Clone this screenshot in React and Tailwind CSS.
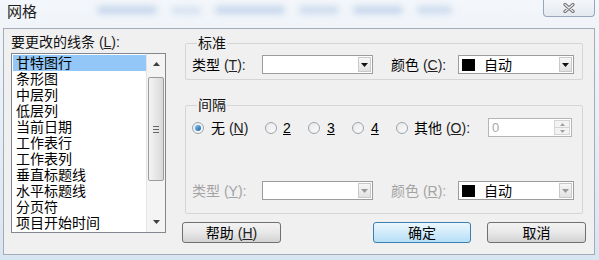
import React from 'react';

const items = ['甘特图行', '条形图', '中层列', '低层列', '当前日期', '工作表行', '工作表列', '垂直标题线', '水平标题线', '分页符', '项目开始时间'];

function Key({ k, disabled, colon = true }) {
  return (
    <span className={disabled ? 'text-[#a3a3a3]' : 'text-[#222]'}>
      {' '}(<span className="underline">{k}</span>){colon ? ':' : ''}
    </span>
  );
}

function Combo({ width, color, disabled }) {
  return (
    <div className={`flex items-center h-[19px] border border-[#9c9c9c] bg-white ${width}`}>
      {color && (
        <div className="flex items-center flex-1 pl-[3px] gap-[9px]">
          <span className="w-[13px] h-[12px] bg-black" />
          <span className="text-[14px] leading-[16px] text-black">自动</span>
        </div>
      )}
      <div className="ml-auto mr-[1px] w-[13px] h-[15px] flex items-center justify-center border border-[#c9c9c9] bg-gradient-to-b from-[#f7f7f7] to-[#e2e2e2]">
        <svg width="7" height="4" viewBox="0 0 7 4">
          <path d="M0 0 H7 L3.5 4 Z" fill={disabled ? '#9a9a9a' : '#111'} />
        </svg>
      </div>
    </div>
  );
}

function Radio({ checked }) {
  return (
    <span className="w-[12px] h-[12px] rounded-full border border-[#9aa3ad] bg-gradient-to-br from-[#e9e9e9] to-[#fbfbfb] flex items-center justify-center shrink-0">
      {checked && <span className="w-[6px] h-[6px] rounded-full bg-gradient-to-br from-[#7fc4f2] to-[#1c5fa8]" />}
    </span>
  );
}

function Button({ children, primary, width }) {
  return (
    <div className={`h-[21px] ${width} rounded-[3px] border flex items-center justify-center text-[14px] leading-[16px] text-black ${primary ? 'border-[#3c7fb1] bg-gradient-to-b from-[#ecf7fd] to-[#b6dff7]' : 'border-[#707070] bg-gradient-to-b from-[#f3f3f3] via-[#e8e8e8] to-[#d3d3d3]'}`}>
      <span>{children}</span>
    </div>
  );
}

export default function App() {
  return (
    <div
      className="w-[599px] h-[260px] overflow-hidden bg-gradient-to-b from-[#f3f6fa] via-[#e5eef7] to-[#d8e5f2] text-black"
      style={{ fontFamily: '"Liberation Sans", "Noto Sans CJK SC", sans-serif' }}
    >
      <div className="h-[28px] flex items-start">
        <div className="ml-[7px] mt-[3px] text-[15px] leading-[17px] text-[#1e1e1e]">网格</div>
        <div className="flex items-center gap-[14px] ml-[60px] mt-[6px] blur-[3px] opacity-60">
          <span className="w-[60px] h-[8px] bg-[#a9c3e3] rounded" />
          <span className="w-[30px] h-[7px] bg-[#c1d4ea] rounded" />
          <span className="w-[70px] h-[8px] bg-[#a9c3e3] rounded" />
          <span className="w-[40px] h-[8px] bg-[#b4cbe6] rounded" />
          <span className="w-[50px] h-[8px] bg-[#a9c3e3] rounded" />
          <span className="w-[35px] h-[8px] bg-[#b4cbe6] rounded" />
        </div>
        <div className="ml-auto mr-[4px] w-[52px] h-[17px] rounded-b-[4px] border border-t-0 border-[#97a7ba] bg-gradient-to-b from-[#f4f6f9] to-[#e4e9ef] flex items-center justify-center">
          <svg width="12" height="10" viewBox="0 0 12 10">
            <path d="M2 1.5 L10 8.5 M10 1.5 L2 8.5" stroke="#6d6d6d" strokeWidth="3.2" strokeLinecap="round" />
            <path d="M2 1.5 L10 8.5 M10 1.5 L2 8.5" stroke="#eeeeee" strokeWidth="1.3" strokeLinecap="round" />
          </svg>
        </div>
      </div>

      <div className="ml-[3px] w-[592px] h-[227px] border border-[#a4acb6] bg-[#f0f0f0] flex">
        {/* left: list */}
        <div className="ml-[7px] pt-[5px] w-[155px]">
          <div className="text-[14px] leading-[16px] text-[#111]">
            要更改的线条<Key k="L" />
          </div>
          <div className="mt-[3px] h-[180px] border border-[#828790] bg-white flex">
            <div className="flex-1 pt-[1px] pl-[1px]">
              {items.map((t, i) => (
                <div
                  key={t}
                  className={`h-[16px] pl-[3px] text-[14px] leading-[16px] text-black ${i === 0 ? 'bg-[#92c7f7]' : ''}`}
                >
                  {t}
                </div>
              ))}
            </div>
            <div className="w-[19px] border-l border-[#e4e4e4] bg-[#f4f4f4] flex flex-col items-center">
              <div className="h-[20px] flex items-center justify-center">
                <svg width="7" height="4" viewBox="0 0 7 4">
                  <path d="M0 4 H7 L3.5 0 Z" fill="#404040" />
                </svg>
              </div>
              <div className="mt-[3px] w-[16px] h-[104px] rounded-[2px] border border-[#9b9b9b] bg-gradient-to-r from-[#f3f3f3] via-[#e7e7e7] to-[#d9d9d9] flex flex-col items-center justify-center gap-[2px]">
                <span className="w-[6px] h-[1px] bg-[#666]" />
                <span className="w-[6px] h-[1px] bg-[#666]" />
                <span className="w-[6px] h-[1px] bg-[#666]" />
              </div>
              <div className="mt-auto h-[20px] flex items-center justify-center">
                <svg width="7" height="4" viewBox="0 0 7 4">
                  <path d="M0 0 H7 L3.5 4 Z" fill="#404040" />
                </svg>
              </div>
            </div>
          </div>
        </div>

        {/* right */}
        <div className="ml-[16px] w-[404px] pt-[6px] flex flex-col">
          <fieldset className="mx-[3px] border border-[#d5d5d5] rounded-[2px] px-[6px] pb-[5px]">
            <legend className="ml-[5px] px-[1px] text-[14px] leading-[16px] text-[#111]">标准</legend>
            <div className="mt-[4px] flex items-center text-[14px] leading-[16px]">
              <div className="w-[70px]">类型<Key k="T" /></div>
              <Combo width="w-[111px]" />
              <div className="ml-[18px] w-[67px]">颜色<Key k="C" /></div>
              <Combo width="w-[116px]" color />
            </div>
          </fieldset>

          <fieldset className="mt-[17px] mx-[3px] border border-[#d5d5d5] rounded-[2px] px-[6px] pb-[13px]">
            <legend className="ml-[5px] px-[1px] text-[14px] leading-[16px] text-[#111]">间隔</legend>
            <div className="mt-[5px] h-[19px] flex items-center text-[14px] leading-[16px]">
              <div className="w-[73px] flex items-center gap-[7px]"><Radio checked /><span>无<Key k="N" colon={false} /></span></div>
              <div className="w-[43px] flex items-center gap-[6px]"><Radio /><span className="underline">2</span></div>
              <div className="w-[44px] flex items-center gap-[7px]"><Radio /><span className="underline">3</span></div>
              <div className="w-[44px] flex items-center gap-[7px]"><Radio /><span className="underline">4</span></div>
              <div className="w-[92px] flex items-center gap-[6px]"><Radio /><span>其他<Key k="O" /></span></div>
              <div className="w-[84px] h-[19px] border border-[#b5b5b5] bg-white flex items-center">
                <span className="pl-[3px] text-[13px] text-[#a8a8a8]">0</span>
                <div className="ml-auto mr-[1px] w-[16px] h-[15px] flex flex-col border border-[#d5d5d5]">
                  <div className="flex-1 flex items-center justify-center border-b border-[#d5d5d5] bg-[#f3f3f3]">
                    <svg width="5" height="3" viewBox="0 0 5 3"><path d="M0 3 H5 L2.5 0 Z" fill="#a0a0a0" /></svg>
                  </div>
                  <div className="flex-1 flex items-center justify-center bg-[#f3f3f3]">
                    <svg width="5" height="3" viewBox="0 0 5 3"><path d="M0 0 H5 L2.5 3 Z" fill="#a0a0a0" /></svg>
                  </div>
                </div>
              </div>
            </div>
            <div className="mt-[44px] flex items-center text-[14px] leading-[16px] text-[#a3a3a3]">
              <div className="w-[70px]">类型<Key k="Y" disabled /></div>
              <Combo width="w-[111px]" disabled />
              <div className="ml-[18px] w-[67px]">颜色<Key k="R" disabled /></div>
              <Combo width="w-[116px]" color disabled />
            </div>
          </fieldset>

          <div className="mt-[8px] flex">
            <Button width="w-[99px]">帮助<Key k="H" colon={false} /></Button>
            <div className="ml-[92px]">
              <Button width="w-[98px]" primary>确定</Button>
            </div>
            <div className="ml-[16px]">
              <Button width="w-[99px]">取消</Button>
            </div>
          </div>
        </div>
      </div>
    </div>
  );
}
